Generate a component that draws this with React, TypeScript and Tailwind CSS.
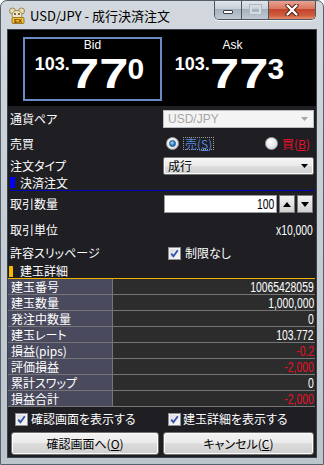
import React from "react";

function Num({ children, className = "" }: { children: React.ReactNode; className?: string }) {
  return (
    <span
      className={
        "inline-block origin-right scale-x-[0.74] text-[14px] leading-none [font-family:'Liberation_Sans',Arial,sans-serif] " +
        className
      }
    >
      {children}
    </span>
  );
}

function CheckBox() {
  return (
    <span className="w-[13px] h-[13px] shrink-0 border border-[#8e8f8f] bg-gradient-to-br from-[#d6d9de] to-[#fbfbfb] shadow-[inset_0_0_0_1px_#f4f4f4] flex items-center justify-center">
      <svg width="9" height="9" viewBox="0 0 9 9">
        <path d="M1.2 4.6 L3.4 7.2 L7.8 1.2" stroke="#3550a8" strokeWidth="1.8" fill="none" />
      </svg>
    </span>
  );
}

function Radio({ checked }: { checked?: boolean }) {
  return (
    <span className="w-[13px] h-[13px] shrink-0 rounded-full border border-[#a4a8ad] bg-[radial-gradient(circle_at_40%_35%,#ffffff,#e4e6e8_60%,#c6c9cc)] flex items-center justify-center">
      {checked && (
        <span className="w-[7px] h-[7px] rounded-full bg-[radial-gradient(circle_at_40%_35%,#9fe0ff,#2e86d0_55%,#10457f)] border border-[#1b4f86]" />
      )}
    </span>
  );
}

function Arrow({ color }: { color: string }) {
  return (
    <svg width="7" height="4" viewBox="0 0 7 4">
      <path d="M0 0 H7 L3.5 4 Z" fill={color} />
    </svg>
  );
}

function PriceBox({
  label,
  big,
  small,
  selected,
}: {
  label: string;
  big: string;
  small: string;
  selected?: boolean;
}) {
  return (
    <div
      className={
        "w-[139px] h-[64px] border-2 flex flex-col items-center text-white [font-family:'Liberation_Sans',Arial,sans-serif] " +
        (selected ? "border-[#6b8bc6]" : "border-transparent")
      }
    >
      <div className="h-[13px] leading-[13px] text-[12px]">{label}</div>
      <div className="flex items-start leading-none font-bold mr-[6px]">
        <span className="text-[18px] mt-[3px]">103.</span>
        <span className="inline-block text-[43px] origin-left scale-x-[1.22] mr-[10px]">{big}</span>
        <span className="text-[30px] mt-[2px]">{small}</span>
      </div>
    </div>
  );
}

const rows: [string, string, boolean][] = [
  ["建玉番号", "10065428059", false],
  ["建玉数量", "1,000,000", false],
  ["発注中数量", "0", false],
  ["建玉レート", "103.772", false],
  ["損益(pips)", "-0.2", true],
  ["評価損益", "-2,000", true],
  ["累計スワップ", "0", false],
  ["損益合計", "-2,000", true],
];

export default function App() {
  return (
    <div className="w-[324px] h-[465px] flex flex-col rounded-t-[7px] border border-[#56606b] bg-gradient-to-b from-[#d2d8de] via-[#c6cdd4] to-[#bcc4cc] overflow-hidden [font-family:'Noto_Sans_CJK_JP','Noto_Sans',sans-serif] [font-feature-settings:'palt']">
      {/* Title bar */}
      <div className="h-[28px] flex items-start shrink-0">
        <div className="flex items-center h-[28px] pl-[8px]">
          <svg width="16" height="17" viewBox="0 0 16 17">
            <circle cx="3.5" cy="4" r="3" fill="#eadcb0" stroke="#8a7440" strokeWidth="0.8" />
            <circle cx="12.5" cy="4" r="3" fill="#eadcb0" stroke="#8a7440" strokeWidth="0.8" />
            <ellipse cx="8" cy="8" rx="5" ry="4.5" fill="#f2e6c0" stroke="#8a7440" strokeWidth="0.8" />
            <circle cx="6" cy="7" r="0.9" fill="#333" />
            <circle cx="10" cy="7" r="0.9" fill="#333" />
            <rect x="3" y="10.5" width="12" height="6" rx="1" fill="#f3c131" stroke="#8a6410" strokeWidth="0.8" />
            <text x="9" y="15.6" fontSize="6" fontWeight="bold" fill="#6b3300" textAnchor="middle" fontFamily="Liberation Sans, Arial, sans-serif">EX</text>
          </svg>
          <span className="ml-[5px] text-[13px] leading-none text-black">USD/JPY - 成行決済注文</span>
        </div>
        <div className="ml-auto mr-[7px] -mt-px flex h-[20px] rounded-b-[5px] border border-t-0 border-[#4a5560] overflow-hidden shadow-[0_1px_0_rgba(255,255,255,0.7)]">
          <div className="w-[27px] border-r border-[#4a5560] bg-[linear-gradient(#e4e9ee,#c8d0d9_45%,#a6b2be_50%,#bfcad4)] flex items-center justify-center">
            <span className="mt-[5px] w-[10px] h-[4px] bg-white border border-[#3a3f45] rounded-[1px]" />
          </div>
          <div className="w-[27px] border-r border-[#4a5560] bg-[linear-gradient(#e4e9ee,#c8d0d9_45%,#a6b2be_50%,#bfcad4)] flex items-center justify-center">
            <span className="w-[11px] h-[9px] border-2 border-[#d6dce2] shadow-[0_0_0_1px_#aeb8c2]" />
          </div>
          <div className="w-[46px] bg-[linear-gradient(#eaa999,#d97760_45%,#c4462d_50%,#cf5a3c_80%,#e58c6a)] flex items-center justify-center">
            <svg width="14" height="12" viewBox="0 0 14 12">
              <path d="M2.5 1.5 L11.5 10.5 M11.5 1.5 L2.5 10.5" stroke="#4a1c12" strokeWidth="4.2" strokeLinecap="round" />
              <path d="M2.5 1.5 L11.5 10.5 M11.5 1.5 L2.5 10.5" stroke="#ffffff" strokeWidth="2.4" strokeLinecap="round" />
            </svg>
          </div>
        </div>
      </div>

      {/* Client */}
      <div className="mx-[6px] border border-[#3b434d] bg-[#1e1e23] flex flex-col h-[429px] text-white text-[12px]">
        <div className="h-[76px] bg-black flex pl-[15px] pt-[7px] gap-[1px]">
          <PriceBox label="Bid" big="77" small="0" selected />
          <PriceBox label="Ask" big="77" small="3" />
        </div>

        {/* 通貨ペア */}
        <div className="h-[26px] flex items-center px-[2px]">
          <div className="w-[153px]">通貨ペア</div>
          <div className="w-[151px] h-[18px] border border-[#b9bcc0] bg-[#f4f4f4] flex items-center pl-[4px] pr-[5px] text-[#a6a6a6] [font-family:'Liberation_Sans',Arial,sans-serif]">
            <span className="flex-1">USD/JPY</span>
            <Arrow color="#a6a6a6" />
          </div>
        </div>

        {/* 売買 */}
        <div className="h-[23px] flex items-center px-[2px]">
          <div className="w-[153px]">売買</div>
          <div className="w-[151px] flex items-center">
            <div className="w-[99px] flex items-center pl-[3px]">
              <Radio checked />
              <span className="ml-[4px] px-px border border-dotted border-[#9a9a9a] leading-[11px] text-[#5688dc]">
                売(<span className="underline">S</span>)
              </span>
            </div>
            <div className="flex items-center pl-[3px]">
              <Radio />
              <span className="ml-[4px] text-[#e8102a] leading-[11px]">
                買(<span className="underline">B</span>)
              </span>
            </div>
          </div>
        </div>

        {/* 注文タイプ */}
        <div className="h-[22px] flex items-center px-[2px]">
          <div className="w-[153px]">注文タイプ</div>
          <div className="w-[151px] h-[18px] rounded-[2px] border border-[#707070] bg-[linear-gradient(#f4f4f4,#ebebeb_50%,#dddddd_50%,#d2d2d2)] shadow-[inset_0_0_0_1px_#fbfbfb] flex items-center pl-[4px] pr-[5px] text-black">
            <span className="flex-1">成行</span>
            <Arrow color="#000000" />
          </div>
        </div>

        {/* 決済注文 header */}
        <div className="h-[14px] mx-[2px] border-b border-[#0000b8] flex items-start">
          <span className="w-[5px] h-[11px] bg-[#0000ff]" />
          <span className="ml-[5px] leading-[12px]">決済注文</span>
        </div>

        {/* 取引数量 */}
        <div className="h-[26px] flex items-center px-[2px]">
          <div className="w-[153px]">取引数量</div>
          <div className="w-[151px] flex items-center">
            <div className="ml-[1px] w-[113px] h-[18px] border border-[#9a9da2] bg-white flex items-center justify-end pr-[2px]">
              <Num className="text-black">100</Num>
            </div>
            <div className="ml-[2px] w-[16px] h-[18px] border border-[#7a7a7a] bg-[linear-gradient(#f2f2f2,#e2e2e2_50%,#d0d0d0)] flex items-center justify-center">
              <svg width="8" height="5" viewBox="0 0 8 5"><path d="M0 5 H8 L4 0 Z" fill="#000" /></svg>
            </div>
            <div className="ml-[2px] w-[16px] h-[18px] border border-[#7a7a7a] bg-[linear-gradient(#f2f2f2,#e2e2e2_50%,#d0d0d0)] flex items-center justify-center">
              <svg width="8" height="5" viewBox="0 0 8 5"><path d="M0 0 H8 L4 5 Z" fill="#000" /></svg>
            </div>
          </div>
        </div>

        {/* 取引単位 */}
        <div className="h-[25px] flex items-center px-[2px]">
          <div className="w-[153px]">取引単位</div>
          <div className="w-[151px] flex justify-end pr-[1px]">
            <Num>x10,000</Num>
          </div>
        </div>

        {/* 許容スリッページ */}
        <div className="h-[22px] flex items-center px-[2px]">
          <div className="w-[153px]">許容スリッページ</div>
          <div className="w-[151px] flex items-center">
            <span className="ml-[5px]"><CheckBox /></span>
            <span className="ml-[4px]">制限なし</span>
          </div>
        </div>

        {/* 建玉詳細 header */}
        <div className="h-[15px] mr-[1px] border-b border-[#f0b400] flex items-start">
          <span className="ml-[1px] mt-[2px] w-[4px] h-[11px] bg-[#f5b800]" />
          <span className="ml-[7px] mt-px leading-[12px]">建玉詳細</span>
        </div>

        {/* table */}
        <div className="mr-[1px] flex flex-col">
          {rows.map(([label, value, neg]) => (
            <div key={label} className="h-[16px] flex border-b border-[#767676]">
              <div className="w-[105px] border-r border-[#767676] bg-[#4a4a5e] pl-[3px] leading-[15px] whitespace-nowrap">
                {label}
              </div>
              <div className="flex-1 bg-[#2c2c2c] flex items-center justify-end pr-[1px]">
                <Num className={neg ? "text-[#e8102a]" : "text-white"}>{value}</Num>
              </div>
            </div>
          ))}
        </div>

        {/* checks */}
        <div className="h-[24px] flex items-center">
          <div className="w-[160px] flex items-center pl-[7px]">
            <CheckBox />
            <span className="ml-[3px]">確認画面を表示する</span>
          </div>
          <div className="flex items-center">
            <CheckBox />
            <span className="ml-[2px]">建玉詳細を表示する</span>
          </div>
        </div>

        {/* buttons */}
        <div className="h-[26px] flex items-start pt-[1px] px-[2px] gap-[4px]">
          <button className="ml-[1px] w-[148px] h-[23px] rounded-[3px] border border-[#707070] bg-[linear-gradient(#f2f2f2,#ebebeb_50%,#dddddd_50%,#cfcfcf)] shadow-[inset_0_0_0_1px_#fcfcfc] text-[12px] text-black flex items-center justify-center">
            確認画面へ(<span className="underline">O</span>)
          </button>
          <button className="flex-1 h-[23px] rounded-[3px] border border-[#707070] bg-[linear-gradient(#f2f2f2,#ebebeb_50%,#dddddd_50%,#cfcfcf)] shadow-[inset_0_0_0_1px_#fcfcfc] text-[12px] text-black flex items-center justify-center">
            キャンセル(<span className="underline">C</span>)
          </button>
        </div>
      </div>
    </div>
  );
}
